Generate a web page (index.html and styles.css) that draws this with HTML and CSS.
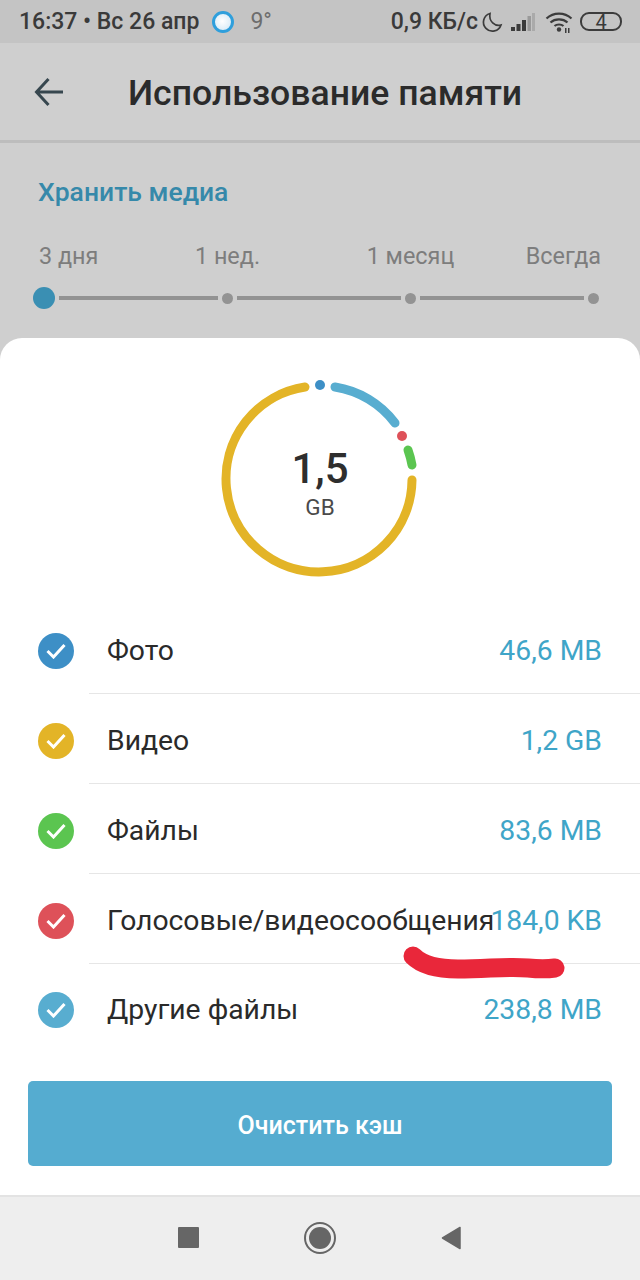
FILE: index.html
```html
<!DOCTYPE html>
<html>
<head>
  <meta charset="utf-8">
  <title>Использование памяти</title>
  <link rel="stylesheet" href="styles.css">
</head>
<body>
  <div class="screen">
    <div class="status-bar">
      <span class="status-time">16:37 • Вс 26 апр</span>
      <span class="weather-dot"></span>
      <span class="status-temp">9°</span>
      <span class="status-speed">0,9 КБ/с</span>
      <svg class="icon-moon" width="22" height="22" viewBox="0 0 22 22">
        <path d="M9 2.500a9 9 0 1 0 11 11.500c-6 1.600-12.500-3.500-11-11.500z" fill="none" stroke="#3c3c3c" stroke-width="1.700"/>
      </svg>
      <svg class="icon-signal" width="26" height="20" viewBox="0 0 26 20">
        <rect x="1" y="15" width="4" height="4" fill="#3c3c3c"/>
        <rect x="6.500" y="12" width="4" height="7" fill="#3c3c3c"/>
        <rect x="12" y="8" width="4" height="11" fill="#3c3c3c"/>
        <rect x="17.500" y="4" width="3.500" height="15" fill="#9a9a9a"/>
        <rect x="22" y="1" width="3" height="18" fill="#aaaaaa"/>
      </svg>
      <svg class="icon-wifi" width="28" height="22" viewBox="0 0 28 22">
        <path d="M1.500 7.500c7-6.500 18-6.500 25 0M5.500 11.500c4.500-4.200 12.500-4.200 17 0M9.500 15c2.300-2 6.700-2 9 0" fill="none" stroke="#3c3c3c" stroke-width="2.200"/>
        <circle cx="14" cy="18.500" r="2.200" fill="#3c3c3c"/>
        <rect x="20" y="17" width="1.500" height="5" fill="#3c3c3c"/>
        <rect x="23" y="17" width="1.500" height="5" fill="#3c3c3c"/>
      </svg>
      <span class="battery"><span class="battery-num">4</span></span>
    </div>

    <div class="app-bar">
      <svg class="icon-back" width="32" height="32" viewBox="0 0 32 32">
        <path d="M30 16H4M15.500 3L3.500 16L15.500 29" fill="none" stroke="#37474f" stroke-width="3"/>
      </svg>
      <h1 class="app-title">Использование памяти</h1>
    </div>

    <div class="keep-media">
      <div class="keep-title">Хранить медиа</div>
      <div class="keep-labels">
        <span>3 дня</span>
        <span class="label-mid">1 нед.</span>
        <span class="label-mid">1 месяц</span>
        <span class="label-end">Всегда</span>
      </div>
      <div class="slider">
        <span class="slider-knob"></span>
        <span class="slider-line slider-line-first"></span>
        <span class="slider-dot"></span>
        <span class="slider-line"></span>
        <span class="slider-dot"></span>
        <span class="slider-line"></span>
        <span class="slider-dot"></span>
      </div>
    </div>

    <div class="sheet">
      <div class="chart">
        <svg width="200" height="200" viewBox="0 0 200 200">
          <g fill="none" stroke-width="9" stroke-linecap="round">
            <path d="M192 102A93 93 0 1 1 85 9" stroke="#e3b427"/>
            <path d="M115 9A93 93 0 0 1 175 45" stroke="#58add0"/>
            <path d="M188 72A93 93 0 0 1 192 87" stroke="#5bc550"/>
          </g>
          <circle cx="100" cy="7" r="5" fill="#3d8fc6"/>
          <circle cx="182" cy="58" r="5" fill="#de5159"/>
        </svg>
        <div class="chart-label">
          <div class="chart-value">1,5</div>
          <div class="chart-unit">GB</div>
        </div>
      </div>

      <div class="rows">
        <div class="row">
          <span class="check check-photo"><svg width="20" height="16" viewBox="0 0 20 16"><path d="M1.500 8l6 6L18.500 2" fill="none" stroke="#fff" stroke-width="3"/></svg></span>
          <div class="row-body"><span class="row-name">Фото</span><span class="row-size">46,6 MB</span></div>
        </div>
        <div class="row">
          <span class="check check-video"><svg width="20" height="16" viewBox="0 0 20 16"><path d="M1.500 8l6 6L18.500 2" fill="none" stroke="#fff" stroke-width="3"/></svg></span>
          <div class="row-body"><span class="row-name">Видео</span><span class="row-size">1,2 GB</span></div>
        </div>
        <div class="row">
          <span class="check check-files"><svg width="20" height="16" viewBox="0 0 20 16"><path d="M1.500 8l6 6L18.500 2" fill="none" stroke="#fff" stroke-width="3"/></svg></span>
          <div class="row-body"><span class="row-name">Файлы</span><span class="row-size">83,6 MB</span></div>
        </div>
        <div class="row">
          <span class="check check-voice"><svg width="20" height="16" viewBox="0 0 20 16"><path d="M1.500 8l6 6L18.500 2" fill="none" stroke="#fff" stroke-width="3"/></svg></span>
          <div class="row-body"><span class="row-name">Голосовые/видеосообщения</span><span class="row-size">184,0 KB</span></div>
          <svg class="scribble" width="170" height="40" viewBox="0 0 170 40">
            <path d="M13 12c8 8 22 13 45 13c30 0 50-3 70-1c10 1 20 1 27 0" fill="none" stroke="#e9273a" stroke-width="19" stroke-linecap="round" stroke-linejoin="round"/>
          </svg>
        </div>
        <div class="row">
          <span class="check check-other"><svg width="20" height="16" viewBox="0 0 20 16"><path d="M1.500 8l6 6L18.500 2" fill="none" stroke="#fff" stroke-width="3"/></svg></span>
          <div class="row-body"><span class="row-name">Другие файлы</span><span class="row-size">238,8 MB</span></div>
        </div>
      </div>

      <button class="clear-btn">Очистить кэш</button>
    </div>

    <div class="nav-bar">
      <span class="nav-square"></span>
      <span class="nav-circle"><span class="nav-circle-in"></span></span>
      <svg width="22" height="24" viewBox="0 0 22 24"><path d="M19 1.500V22.500L1.500 12z" fill="#666" stroke="#666" stroke-width="1.500" stroke-linejoin="round"/></svg>
    </div>
  </div>
</body>
</html>
```

FILE: styles.css
```css
* {
  box-sizing: border-box;
}

body {
  margin: 0;
  font-family: Roboto, "Noto Sans", sans-serif;
  background-color: #cfcfcf;
}

.screen {
  width: 640px;
  height: 1280px;
  display: flex;
  flex-direction: column;
  overflow: hidden;
}

/* status bar */
.status-bar {
  height: 43px;
  flex: none;
  display: flex;
  align-items: center;
  padding: 0 18px 0 19px;
  background-color: #c4c4c4;
  color: #3a3a3a;
  font-size: 23px;
  font-weight: 500;
}

.weather-dot {
  width: 22px;
  height: 22px;
  margin-left: 13px;
  border-radius: 50%;
  border: 3px solid #2f9fdc;
  background: radial-gradient(circle at 45% 45%, #ffffff, #cfe6f5);
}

.status-temp {
  margin-left: 16px;
  font-weight: 400;
  color: #6d6d6d;
}

.status-speed {
  margin-left: auto;
}

.icon-moon {
  margin-left: 3px;
}

.icon-signal {
  margin-left: 7px;
}

.icon-wifi {
  margin-left: 9px;
}

.battery {
  width: 42px;
  height: 19px;
  margin-left: 7px;
  display: flex;
  align-items: center;
  justify-content: center;
  border: 2px solid #3c3c3c;
  border-radius: 9px;
  font-size: 20px;
  font-weight: 400;
  line-height: 1;
}

/* app bar */
.app-bar {
  height: 100px;
  flex: none;
  display: flex;
  align-items: center;
  padding-left: 33px;
  border-bottom: 3px solid #bdbdbd;
}

.app-title {
  margin: 2px 0 0 63px;
  color: #2b2b2b;
  font-size: 35.600px;
  font-weight: 500;
}

/* keep media */
.keep-media {
  height: 195px;
  flex: none;
  padding-top: 35px;
}

.keep-title {
  padding-left: 38px;
  color: #3689aa;
  font-size: 26.500px;
  font-weight: 500;
  line-height: 28px;
}

.keep-labels {
  display: grid;
  grid-template-columns: 97px 183px 183px 99px;
  margin-top: 37px;
  padding-left: 39px;
  color: #7d7d7d;
  font-size: 23.400px;
  line-height: 26px;
}

.label-mid {
  text-align: center;
}

.label-end {
  text-align: right;
}

.slider {
  display: flex;
  align-items: center;
  gap: 4px;
  margin-top: 18px;
  padding: 0 41px 0 33px;
}

.slider-knob {
  width: 22px;
  height: 22px;
  flex: none;
  border-radius: 50%;
  background-color: #3a8fb3;
}

.slider-dot {
  width: 11px;
  height: 11px;
  flex: none;
  border-radius: 50%;
  background-color: #939393;
}

.slider-line {
  height: 4px;
  flex: 1;
  background-color: #939393;
}

.slider-line-first {
  flex: none;
  width: 159px;
}

/* white sheet */
.sheet {
  height: 857px;
  flex: none;
  display: flex;
  flex-direction: column;
  border-radius: 22px 22px 0 0;
  background-color: #fff;
}

.chart {
  position: relative;
  width: 200px;
  height: 200px;
  margin: 40px auto 0;
}

.chart-label {
  position: absolute;
  top: 0;
  left: 0;
  width: 200px;
  height: 200px;
  display: flex;
  flex-direction: column;
  align-items: center;
  justify-content: center;
  padding-top: 8px;
}

.chart-value {
  color: #2e2e2e;
  font-size: 42px;
  font-weight: 500;
  line-height: 46px;
}

.chart-unit {
  margin-top: 3px;
  color: #4a4a4a;
  font-size: 22.500px;
  line-height: 24px;
}

.rows {
  margin-top: 26px;
}

.row {
  position: relative;
  height: 90px;
  display: flex;
  align-items: center;
  padding-left: 38px;
}

.row-body {
  height: 100%;
  flex: 1;
  display: flex;
  align-items: center;
  justify-content: space-between;
  margin-left: 15px;
  padding: 4px 38px 0 18px;
  border-bottom: 1px solid #e6e6e6;
  font-size: 28.300px;
}

.check {
  width: 36px;
  height: 36px;
  flex: none;
  display: flex;
  align-items: center;
  justify-content: center;
  margin-top: 4px;
  border-radius: 50%;
}

.row:last-child .row-body {
  padding-top: 1px;
  border-bottom: none;
}

.row:last-child .check {
  margin-top: 2px;
}

.row-name {
  flex: 1;
  min-width: 0;
  color: #2a2a2a;
  white-space: nowrap;
}

.row-size {
  flex: none;
  color: #3fa5c8;
}

.check-photo {
  background-color: #3d8fc6;
}

.check-video {
  background-color: #e3b427;
}

.check-files {
  background-color: #5bc550;
}

.check-voice {
  background-color: #de5159;
}

.check-other {
  background-color: #58add0;
}

/* marker stroke drawn over the screenshot */
.scribble {
  position: absolute;
  left: 400px;
  top: 70px;
}

.clear-btn {
  width: 584px;
  height: 85px;
  margin: 27px 0 0 28px;
  padding-top: 4px;
  border: none;
  border-radius: 5px;
  background-color: #55acd0;
  color: #fff;
  font-family: Roboto, sans-serif;
  font-size: 25px;
  font-weight: 500;
}

/* navigation bar */
.nav-bar {
  flex: 1;
  display: flex;
  align-items: center;
  justify-content: center;
  gap: 105px;
  border-top: 2px solid #e3e3e3;
  background-color: #eeeeee;
  padding-bottom: 2px;
}

.nav-square {
  width: 21px;
  height: 21px;
  border-radius: 1px;
  background-color: #666;
}

.nav-circle {
  width: 32px;
  height: 32px;
  display: flex;
  align-items: center;
  justify-content: center;
  border: 2px solid #666;
  border-radius: 50%;
}

.nav-circle-in {
  width: 22px;
  height: 22px;
  border-radius: 50%;
  background-color: #666;
}
```
